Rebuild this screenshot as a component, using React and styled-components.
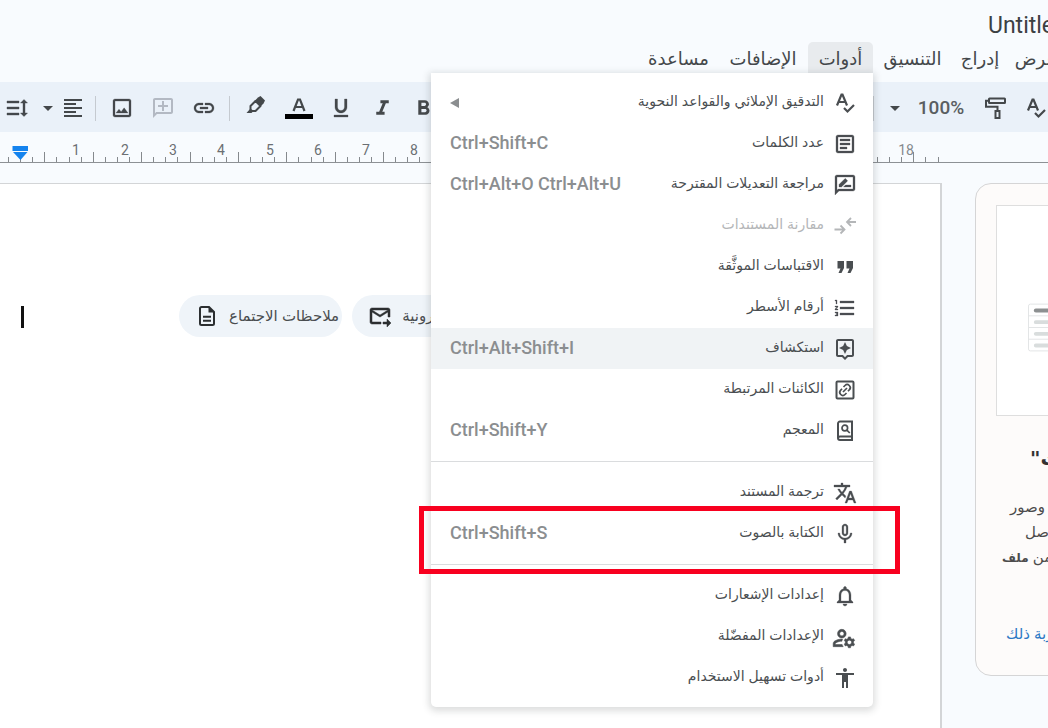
import React from "react";
import styled, { createGlobalStyle } from "styled-components";
import {
  MdOutlineAssistant,
  MdFormatQuote,
  MdFormatListNumbered,
  MdTranslate,
  MdMicNone,
  MdNotificationsNone,
  MdOutlineManageAccounts,
  MdAccessibility,
  MdOutlineRateReview,
  MdOutlineArticle,
  MdFormatLineSpacing,
  MdFormatAlignLeft,
  MdOutlineImage,
  MdOutlineAddComment,
  MdLink,
  MdFormatUnderlined,
  MdFormatItalic,
  MdFormatBold,
  MdOutlineForwardToInbox,
  MdArrowDropDown,
} from "react-icons/md";

const GlobalStyle = createGlobalStyle`
  * { box-sizing: border-box; }
  body { margin: 0; background: #f8fbfe; }
  button { font: inherit; color: inherit; background: none; border: 0; padding: 0; margin: 0; }
  /* Material icons carry an empty bounding path that must not be stroked */
  svg[fill="currentColor"] path[fill="none"] { stroke: none; }
`;

const Shell = styled.div`
  display: flex;
  flex-direction: column;
  min-height: 100vh;
  overflow: hidden;
  background: #f8fbfe;
  color: #3c4043;
  font-family: "Liberation Sans", "DejaVu Sans", sans-serif;
`;

const Header = styled.header`
  position: relative;
  z-index: 2;
  display: flex;
  flex-direction: column;
  padding-top: 10px;
`;

const Title = styled.h1`
  align-self: flex-end;
  width: 60px;
  margin: 0;
  font: 400 23px/32px Roboto, sans-serif;
  color: #3c4043;
  white-space: nowrap;
`;

const MenuBar = styled.nav`
  display: flex;
  direction: rtl;
  height: 31px;
  margin-right: -16px;
`;

const MenuSlot = styled.div`
  position: relative;
  flex: none;
  width: ${(p) => p.$width}px;
`;

const MenuButton = styled.button`
  display: block;
  width: 100%;
  height: 100%;
  padding-top: 2px;
  border-radius: 5px 5px 0 0;
  background: ${(p) => (p.$open ? "#e8ebee" : "transparent")};
  font: 400 18px/29px "DejaVu Sans", sans-serif;
  color: #44484b;
  white-space: nowrap;
`;

const Popup = styled.div`
  position: absolute;
  top: 100%;
  right: 0;
  width: 442px;
  padding: 9px 0;
  background: #fff;
  border-radius: 0 0 5px 5px;
  box-shadow: 0 2px 7px 2px rgba(60, 64, 67, 0.18);
`;

const RowSlot = styled.div`
  position: relative;
`;

const Row = styled.button`
  display: flex;
  align-items: center;
  gap: 9px;
  width: 100%;
  height: 41px;
  padding: 0 16px 0 19px;
  direction: rtl;
  background: ${(p) => (p.$active ? "#f0f3f5" : "transparent")};
  color: ${(p) => (p.disabled ? "#b4b6b8" : "#4a4e51")};
`;

const IconBox = styled.span`
  flex: none;
  display: grid;
  place-items: center;
  width: 24px;
  height: 24px;
`;

const RowLabel = styled.span`
  flex: 1;
  padding-bottom: 3px;
  text-align: right;
  font: 400 14px/24px "Liberation Sans", "DejaVu Sans", sans-serif;
  white-space: nowrap;
`;

const Shortcut = styled.span`
  direction: ltr;
  padding-bottom: 2px;
  font: 500 18px/24px Roboto, sans-serif;
  color: #8b8e90;
  white-space: nowrap;
`;

const SubmenuArrow = styled.span`
  width: 0;
  height: 0;
  border: 5px solid transparent;
  border-right: 9px solid #8b8e90;
  border-left: 0;
`;

const Divider = styled.hr`
  height: 1px;
  margin: 10px 0;
  border: 0;
  background: #dadcde;
`;

const Marker = styled.div`
  position: absolute;
  inset: -7px -27px -20px -12px;
  border: 5px solid #f8001f;
  pointer-events: none;
`;

const Toolbar = styled.div`
  display: flex;
  justify-content: space-between;
  height: 50px;
  margin-top: 9px;
  background: #eaf1f9;
  color: #44484b;
`;

const ToolGroup = styled.div`
  display: flex;
  align-items: center;
  padding-top: 2px;
`;

const Tool = styled.button`
  display: grid;
  place-items: center;
  flex: none;
  width: ${(p) => p.$width}px;
  height: 40px;
  color: ${(p) => (p.disabled ? "#b3b9c3" : "#44484b")};
`;

const Mirrored = styled.span`
  display: grid;
  transform: scaleX(-1);
`;

const ToolDivider = styled.span`
  flex: none;
  width: 1px;
  height: 25px;
  margin-left: ${(p) => p.$before || 0}px;
  background: #c5cad0;
`;

const Zoom = styled.button`
  width: 50px;
  height: 40px;
  font: 500 19px/40px Roboto, sans-serif;
  color: #5a5e61;
`;

const Ruler = styled.div`
  display: flex;
  justify-content: space-between;
  height: 31px;
  margin-bottom: 20px;
  border-bottom: 1px solid #8d9195;
`;

const RulerScale = styled.svg`
  display: block;
  font: 400 14px Roboto, sans-serif;
`;

const Workspace = styled.div`
  flex: 1;
  display: flex;
  align-items: flex-start;
`;

const Page = styled.main`
  flex: 1;
  align-self: stretch;
  display: flex;
  align-items: flex-start;
  min-width: 0;
  padding: 111px 0 0 21px;
  overflow: hidden;
  background: #fff;
  border: solid #d3d5d7;
  border-width: 1px 2px 0 0;
`;

const Caret = styled.span`
  flex: none;
  width: 3px;
  height: 22px;
  margin-top: 11px;
  background: #111;
`;

const Chips = styled.div`
  display: flex;
  gap: 10px;
  margin-left: 155px;
`;

const Chip = styled.button`
  display: flex;
  align-items: center;
  gap: 10px;
  flex: none;
  height: 42px;
  padding: 0 3px 0 16px;
  border-radius: 21px;
  background: #eff4f9;
  color: #2c2f31;
`;

const ChipLabel = styled.span`
  direction: rtl;
  font: 400 15px/24px "Liberation Sans", "DejaVu Sans", sans-serif;
  color: #4a4d50;
  white-space: nowrap;
`;

const Panel = styled.aside`
  flex: none;
  width: 94px;
  margin: 0 -21px 0 33px;
  padding: 21px 0 29px 20px;
  border: 1px solid #d5d5d6;
  border-radius: 16px;
  background: #fdfbfa;
`;

const Preview = styled.div`
  display: flex;
  align-items: center;
  height: 211px;
  padding: 34px 0 0 31px;
  border: 1px solid #dedede;
  background: #fff;
`;

const PanelTitle = styled.h2`
  margin: 28px 0 22px 34px;
  font: 700 20px/28px "DejaVu Sans", sans-serif;
  direction: rtl;
  text-align: left;
  white-space: nowrap;
  color: #333;
`;

const PanelLine = styled.p`
  display: flex;
  margin: 0 0 0 ${(p) => p.$indent}px;
  font: 400 15px/25px "Liberation Sans", "DejaVu Sans", sans-serif;
  white-space: nowrap;
  color: #4c4c4c;

  b {
    font-size: 12px;
  }
`;

const PanelText = styled.span`
  flex: none;
  direction: rtl;
`;

const PanelLink = styled.a`
  display: flex;
  margin: 50px 0 0 10px;
  font: 400 15px/25px "Liberation Sans", "DejaVu Sans", sans-serif;
  white-space: nowrap;
  color: #2b78c5;
  text-decoration: none;
`;

function Drawing({ size = 24, children }) {
  return (
    <svg width={size} height={size} viewBox="0 0 24 24" fill="none" stroke="currentColor" strokeWidth="2">
      {children}
    </svg>
  );
}

const SpellIcon = () => (
  <Drawing>
    <path d="M4 14.500 8.500 3.500h1L14 14.500M5.800 11h6.400" strokeWidth="2.200" />
    <path d="m11 17 3.500 3.500L21 14" strokeWidth="2.200" />
  </Drawing>
);

const CompareIcon = () => (
  <Drawing>
    <path d="M23 8h-9M18 4l-4 4 4 4M1.500 15.500H11M7.500 11.500l4 4-4 4" strokeWidth="1.800" />
  </Drawing>
);

const QuoteIcon = () => (
  <Drawing>
    <path d="M4.500 6h6.500v7l-2.500 5H5.500l2-4.500h-3zM13.500 6H20v7l-2.500 5h-3l2-4.500h-3z" fill="currentColor" stroke="none" />
  </Drawing>
);

const LinkedIcon = () => (
  <Drawing>
    <rect x="3.500" y="3.500" width="17" height="17" rx="1" />
    <path d="m10 14 4-4M10.500 9l1.500-1.500a3 3 0 0 1 4.300 4.300L15 13.300M13.500 15 12 16.500a3 3 0 0 1-4.300-4.300L9 10.700" strokeWidth="1.700" />
  </Drawing>
);

const DictionaryIcon = () => (
  <Drawing>
    <path d="M19 17.500V2.500H7a2 2 0 0 0-2 2v14.500a2 2 0 0 0 2 2h12v-3.500H7a2 2 0 0 0-2 2" />
    <circle cx="11.800" cy="9" r="2.800" strokeWidth="1.700" />
    <path d="m13.600 10.800 3.200 3.200" strokeWidth="1.700" />
  </Drawing>
);

const HighlighterIcon = () => (
  <Drawing>
    <path d="M14 1.500 16.500 0 21 4.500 19.500 7.500 16.500 10.500 10.500 5z" fill="currentColor" stroke="none" />
    <path d="M11.500 5 6.500 10v3.500l1.500 1.500h3.500l5-5z" strokeLinejoin="round" />
    <path d="M6.500 12.500 9 15.500 7.500 17H2.500z" fill="currentColor" stroke="none" />
  </Drawing>
);

const TextColorIcon = () => (
  <svg width="28" height="28" viewBox="0 0 28 28">
    <path d="M8.500 17 13 5.500h2L19.500 17M10.200 13h7.600" fill="none" stroke="currentColor" strokeWidth="2.200" />
    <rect y="20" width="28" height="5" fill="#000" />
  </svg>
);

const RollerIcon = () => (
  <Drawing>
    <rect x="6" y="2.500" width="16" height="4.500" rx="0.500" />
    <path d="M6 4.700H3v6h11.500V15" />
    <rect x="12.500" y="15" width="4" height="7" />
  </Drawing>
);

const NotesIcon = () => (
  <Drawing>
    <path d="M14 3H6.500A1.500 1.500 0 0 0 5 4.500v15A1.500 1.500 0 0 0 6.500 21h11a1.500 1.500 0 0 0 1.500-1.500V8z" />
    <path d="M13.500 3v5.500H19z" fill="currentColor" stroke="none" />
    <path d="M8 12.700h8M8 16.700h8" />
  </Drawing>
);

const menuItems = [
  { label: "التدقيق الإملائي والقواعد النحوية", icon: <SpellIcon />, submenu: true },
  { label: "عدد الكلمات", icon: <MdOutlineArticle size={24} strokeWidth={0.3} />, keys: "Ctrl+Shift+C" },
  { label: "مراجعة التعديلات المقترحة", icon: <MdOutlineRateReview size={24} strokeWidth={0.3} />, keys: "Ctrl+Alt+O Ctrl+Alt+U" },
  { label: "مقارنة المستندات", icon: <CompareIcon />, disabled: true },
  { label: "الاقتباسات الموثَّقة", icon: <QuoteIcon /> },
  { label: "أرقام الأسطر", icon: <MdFormatListNumbered size={24} strokeWidth={0.3} /> },
  { label: "استكشاف", icon: <MdOutlineAssistant size={24} />, keys: "Ctrl+Alt+Shift+I", active: true },
  { label: "الكائنات المرتبطة", icon: <LinkedIcon /> },
  { label: "المعجم", icon: <DictionaryIcon />, keys: "Ctrl+Shift+Y" },
  { divider: true },
  { label: "ترجمة المستند", icon: <MdTranslate size={24} strokeWidth={0.3} /> },
  { label: "الكتابة بالصوت", icon: <MdMicNone size={24} strokeWidth={0.3} />, keys: "Ctrl+Shift+S", marked: true },
  { divider: true },
  { label: "إعدادات الإشعارات", icon: <MdNotificationsNone size={24} strokeWidth={0.3} /> },
  { label: "الإعدادات المفضّلة", icon: <MdOutlineManageAccounts size={26} strokeWidth={0.5} /> },
  { label: "أدوات تسهيل الاستخدام", icon: <MdAccessibility size={24} /> },
];

function ToolsMenu() {
  return (
    <Popup role="menu">
      {menuItems.map((item, i) =>
        item.divider ? (
          <Divider key={i} />
        ) : (
          <RowSlot key={i}>
            <Row role="menuitem" disabled={item.disabled} $active={item.active}>
              <IconBox>{item.icon}</IconBox>
              <RowLabel>{item.label}</RowLabel>
              {item.keys && <Shortcut>{item.keys}</Shortcut>}
              {item.submenu && <SubmenuArrow />}
            </Row>
            {item.marked && <Marker />}
          </RowSlot>
        )
      )}
    </Popup>
  );
}

const menus = [
  { label: "عرض", width: 56 },
  { label: "إدراج", width: 56 },
  { label: "التنسيق", width: 79 },
  { label: "أدوات", width: 65, open: true },
  { label: "الإضافات", width: 90 },
  { label: "مساعدة", width: 79 },
];

const STEP = 12.1;

function LeftScale() {
  const ticks = Array.from({ length: 36 }, (_, i) => i);
  return (
    <RulerScale width="440" height="30" viewBox="0 0 440 30">
      {ticks.map((i) => {
        const x = Math.round(8 + i * STEP);
        const tall = i % 4 === 3;
        return <path key={i} d={`M${x + 0.5} ${tall ? 20 : 25}V30`} stroke="#85898d" />;
      })}
      {[1, 2, 3, 4, 5, 6, 7, 8].map((n) => (
        <text key={n} x={Math.round(28 + n * 48.3)} y="23" textAnchor="middle" fill="#6b6f73">
          {n}
        </text>
      ))}
      <path d="M12.500 14h15.500v5H12.500zM13 20h14.500l-7 8z" fill="#1483ee" />
    </RulerScale>
  );
}

function RightScale() {
  return (
    <RulerScale width="180" height="30" viewBox="0 0 180 30">
      {[9, 21, 33, 45, 57, 70].map((x) => (
        <path key={x} d={`M${x + 0.5} ${x === 45 ? 20 : 25}V30`} stroke="#85898d" />
      ))}
      <text x="38" y="23" textAnchor="middle" fill="#85898d">
        18
      </text>
    </RulerScale>
  );
}

export default function App() {
  return (
    <Shell>
      <GlobalStyle />
      <Header>
        <Title>Untitled document</Title>
        <MenuBar>
          {menus.map((m) => (
            <MenuSlot key={m.label} $width={m.width}>
              <MenuButton $open={m.open}>{m.label}</MenuButton>
              {m.open && <ToolsMenu />}
            </MenuSlot>
          ))}
        </MenuBar>
      </Header>
      <Toolbar>
        <ToolGroup>
          <Tool $width={34} aria-label="تباعد الأسطر">
            <Mirrored><MdFormatLineSpacing size={24} strokeWidth={0.4} /></Mirrored>
          </Tool>
          <Tool $width={27} aria-label="خيارات المحاذاة"><MdArrowDropDown size={24} /></Tool>
          <Tool $width={24} aria-label="محاذاة"><MdFormatAlignLeft size={24} /></Tool>
          <ToolDivider $before={10} />
          <Tool $width={52} aria-label="صورة"><MdOutlineImage size={24} strokeWidth={0.3} /></Tool>
          <Tool $width={30} disabled aria-label="تعليق">
            <Mirrored><MdOutlineAddComment size={24} /></Mirrored>
          </Tool>
          <Tool $width={51} aria-label="رابط"><MdLink size={24} strokeWidth={0.3} /></Tool>
          <ToolDivider />
          <Tool $width={52} aria-label="تمييز"><HighlighterIcon /></Tool>
          <Tool $width={34} aria-label="لون النص"><TextColorIcon /></Tool>
          <Tool $width={50} aria-label="تسطير"><MdFormatUnderlined size={24} strokeWidth={0.3} /></Tool>
          <Tool $width={32} aria-label="مائل"><MdFormatItalic size={25} /></Tool>
          <Tool $width={50} aria-label="غامق"><MdFormatBold size={25} /></Tool>
        </ToolGroup>
        <ToolGroup>
          <ToolDivider />
          <Tool $width={42} aria-label="خيارات التكبير"><MdArrowDropDown size={24} /></Tool>
          <Zoom>100%</Zoom>
          <Tool $width={58} aria-label="نسخ التنسيق"><RollerIcon /></Tool>
          <Tool $width={24} aria-label="تدقيق إملائي"><SpellIcon /></Tool>
        </ToolGroup>
      </Toolbar>
      <Ruler>
        <LeftScale />
        <RightScale />
      </Ruler>
      <Workspace>
        <Page>
          <Caret />
          <Chips>
            <Chip>
              <NotesIcon />
              <ChipLabel>ملاحظات الاجتماع</ChipLabel>
            </Chip>
            <Chip>
              <MdOutlineForwardToInbox size={24} strokeWidth={0.5} />
              <ChipLabel>مسودة رسالة إلكترونية</ChipLabel>
            </Chip>
          </Chips>
        </Page>
        <Panel>
          <Preview>
            <svg width="40" height="50" viewBox="0 0 40 50" fill="none" stroke="#e2e4e5">
              <rect x="0.500" y="0.500" width="50" height="48" rx="2" />
              <path d="M0 12.500h40M0 24.500h40M0 36.500h40" />
              <path d="M8 7h34" stroke="#8d9091" strokeWidth="4" strokeLinecap="round" />
              <path d="M8 19h34M8 31h34M8 43h34" stroke="#d9dddd" strokeWidth="4" strokeLinecap="round" />
            </svg>
          </Preview>
          <PanelTitle>ت"</PanelTitle>
          <PanelLine $indent={14}><PanelText>وصور</PanelText></PanelLine>
          <PanelLine $indent={29}><PanelText>صل</PanelText></PanelLine>
          <PanelLine $indent={6}><PanelText>من <b>ملف</b></PanelText></PanelLine>
          <PanelLink href="#try"><PanelText>تجربة ذلك</PanelText></PanelLink>
        </Panel>
      </Workspace>
    </Shell>
  );
}
